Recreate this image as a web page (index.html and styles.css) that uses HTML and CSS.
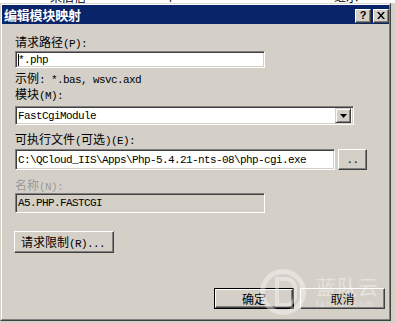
FILE: index.html
```html
<!DOCTYPE html>
<html>
<head>
<meta charset="utf-8">
<link rel="stylesheet" href="styles.css">
</head>
<body>
<div class="bgwin">
  <span class="bg1 zh">来旧信</span>
  <span class="bg2 m">isapimodule</span>
  <span class="bg3 zh">继承</span>
</div>
<div class="dlg">
  <div class="dlg-in">
    <div class="title">
      <span class="title-text">编辑模块映射</span>
      <div class="tbtns">
        <div class="tbtn"><span class="q">?</span></div>
        <div class="tbtn">
          <svg width="8" height="7" viewBox="0 0 8 7"><path d="M0 0h2l2 2.5L6 0h2L5 3.5 8 7H6L4 4.5 2 7H0l3-3.5z" fill="#000"/></svg>
        </div>
      </div>
    </div>
    <div class="body">
      <div class="lbl l1"><span class="zh">请求路径</span><span class="m">(P):</span></div>
      <div class="field f1"><span class="caret"></span><span class="m">*.php</span></div>
      <div class="lbl l2"><span class="zh">示例</span><span class="m">: *.bas, wsvc.axd</span></div>
      <div class="lbl l3"><span class="zh">模块</span><span class="m">(M):</span></div>
      <div class="field combo"><span class="m ctext">FastCgiModule</span>
        <div class="ddbtn"><svg width="7" height="4" viewBox="0 0 7 4"><path d="M0 0h7L3.5 4z" fill="#000"/></svg></div>
      </div>
      <div class="lbl l4"><span class="zh">可执行文件</span><span class="m">(</span><span class="zh">可选</span><span class="m">)(E):</span></div>
      <div class="row r1">
        <div class="field f2"><span class="m">C:\QCloud_IIS\Apps\Php-5.4.21-nts-08\php-cgi.exe</span></div>
        <div class="btn dots"><span class="m">..</span></div>
      </div>
      <div class="lbl l5 dis"><span class="zh">名称</span><span class="m">(N):</span></div>
      <div class="field f3"><span class="m">A5.PHP.FASTCGI</span></div>
      <div class="btn restrict"><span class="zh">请求限制</span><span class="m">(R)...</span></div>
      <div class="row r2">
        <div class="defbtn"><div class="btn ok"><span class="zh">确定</span></div></div>
        <div class="btn cancel"><span class="zh">取消</span></div>
      </div>
    </div>
    <div class="wm">
      <div class="wm-logo"><div class="wm-d"></div></div>
      <div class="wm-txt">
        <span class="wm-zh">蓝队云</span>
        <span class="wm-en">landui.com</span>
      </div>
    </div>
  </div>
</div>
</body>
</html>
```
FILE: styles.css
```css
html, body {
  margin: 0;
  padding: 0;
}
body {
  width: 395px;
  height: 323px;
  background: #d4d0c8;
  overflow: hidden;
  font-family: "Noto Sans CJK SC", sans-serif;
  color: #000;
}
.zh {
  font-family: "Noto Sans CJK SC", sans-serif;
  font-size: 12px;
}
.m {
  font-family: "Liberation Mono", monospace;
  font-size: 11px;
  letter-spacing: -0.6px;
}
.bgwin {
  height: 3px;
  background: #fff;
  overflow: hidden;
  display: flex;
  line-height: 12px;
}
.bgwin span {
  margin-top: -9px;
  white-space: nowrap;
}
.bg1 { margin-left: 50px; }
.bg2 { margin-left: 65px; }
.bg3 { margin-left: 117px; }

.dlg {
  width: 389px;
  height: 316px;
  border: 1px solid;
  border-color: #d8d8d8 #404040 #404040 #d4d0c8;
}
.dlg-in {
  position: relative;
  height: 314px;
  border: 1px solid;
  border-color: #fff #808080 #808080 #fff;
}
.title {
  height: 19px;
  background: #0a246a;
  display: flex;
  align-items: center;
}
.title-text {
  color: #fff;
  font-weight: bold;
  font-size: 13px;
  line-height: 19px;
  margin-left: 2px;
  letter-spacing: -0.2px;
}
.tbtns {
  margin-left: auto;
  display: flex;
  gap: 2px;
  margin-top: 2px;
}
.tbtn {
  width: 14px;
  height: 12px;
  background: #d4d0c8;
  border: 1px solid;
  border-color: #fff #404040 #404040 #fff;
  box-shadow: inset -1px -1px #808080;
  display: flex;
  align-items: center;
  justify-content: center;
}
.q {
  font-family: "Liberation Sans", sans-serif;
  font-weight: bold;
  font-size: 11px;
  line-height: 11px;
}
.body {
  padding-left: 13px;
  display: flex;
  flex-direction: column;
  align-items: flex-start;
}
.lbl {
  height: 14px;
  line-height: 14px;
  white-space: nowrap;
  display: flex;
  align-items: baseline;
}
.dis { color: #9a9a9a; }
.l1 { margin-top: 11px; }
.l2 { margin-top: 3px; }
.l3 { margin-top: 2px; }
.l4 { margin-top: 7px; }
.l5 { margin-top: 8px; }

.field {
  box-sizing: border-box;
  background: #fff;
  border: 1px solid;
  border-color: #808080 #fff #fff #808080;
  box-shadow: inset 1px 1px #404040, inset -1px -1px #d4d0c8;
  display: flex;
  align-items: center;
  padding-left: 2px;
  white-space: nowrap;
  overflow: hidden;
}
.f1 {
  width: 250px;
  height: 17px;
  margin-top: 2px;
}
.caret {
  width: 1px;
  height: 12px;
  background: #000;
  margin-right: -1px;
}
.combo {
  width: 339px;
  height: 19px;
  margin-top: 5px;
  padding-right: 2px;
}
.ctext { flex: 1; }
.ddbtn {
  width: 14px;
  height: 13px;
  background: #d4d0c8;
  border: 1px solid;
  border-color: #d4d0c8 #404040 #404040 #d4d0c8;
  box-shadow: inset 1px 1px #fff, inset -1px -1px #808080;
  display: flex;
  align-items: center;
  justify-content: center;
}
.row {
  display: flex;
  align-items: flex-start;
}
.r1 {
  margin-top: 3px;
  gap: 3px;
}
.f2 {
  width: 320px;
  height: 21px;
}
.btn {
  box-sizing: border-box;
  background: #d4d0c8;
  border: 1px solid;
  border-color: #fff #404040 #404040 #fff;
  box-shadow: inset -1px -1px #808080;
  display: flex;
  align-items: center;
  justify-content: center;
  white-space: nowrap;
}
.dots {
  width: 29px;
  height: 21px;
}
.f3 {
  width: 250px;
  height: 20px;
  margin-top: 1px;
  background: #d4d0c8;
}
.restrict {
  width: 100px;
  height: 22px;
  margin-top: 18px;
  margin-left: -1px;
  justify-content: flex-start;
  padding-left: 6px;
  align-items: baseline;
  line-height: 20px;
}
.r2 {
  margin-top: 35px;
  margin-left: 199px;
  gap: 6px;
}
.defbtn {
  border: 1px solid #000;
}
.ok {
  width: 78px;
  height: 19px;
}
.cancel {
  width: 85px;
  height: 21px;
}
.wm {
  position: absolute;
  left: 258px;
  top: 264px;
  width: 130px;
  display: flex;
  align-items: center;
  gap: 10px;
  opacity: 0.4;
  pointer-events: none;
  white-space: nowrap;
}
.wm-logo {
  flex: none;
  width: 46px;
  height: 46px;
  border: 5px solid #fff;
  border-radius: 50%;
  box-sizing: border-box;
  display: flex;
  align-items: center;
  justify-content: center;
}
.wm-d {
  width: 14px;
  height: 22px;
  border: 4px solid #fff;
  border-radius: 0 11px 11px 0;
  margin-left: 6px;
}
.wm-txt {
  display: flex;
  flex-direction: column;
  align-items: flex-start;
}
.wm-zh {
  color: #fff;
  font-family: "Noto Sans CJK SC", sans-serif;
  font-size: 20px;
  line-height: 24px;
  letter-spacing: 1px;
}
.wm-en {
  color: #fff;
  font-family: "Liberation Sans", sans-serif;
  font-size: 9px;
  line-height: 10px;
  letter-spacing: 1.5px;
}
```
